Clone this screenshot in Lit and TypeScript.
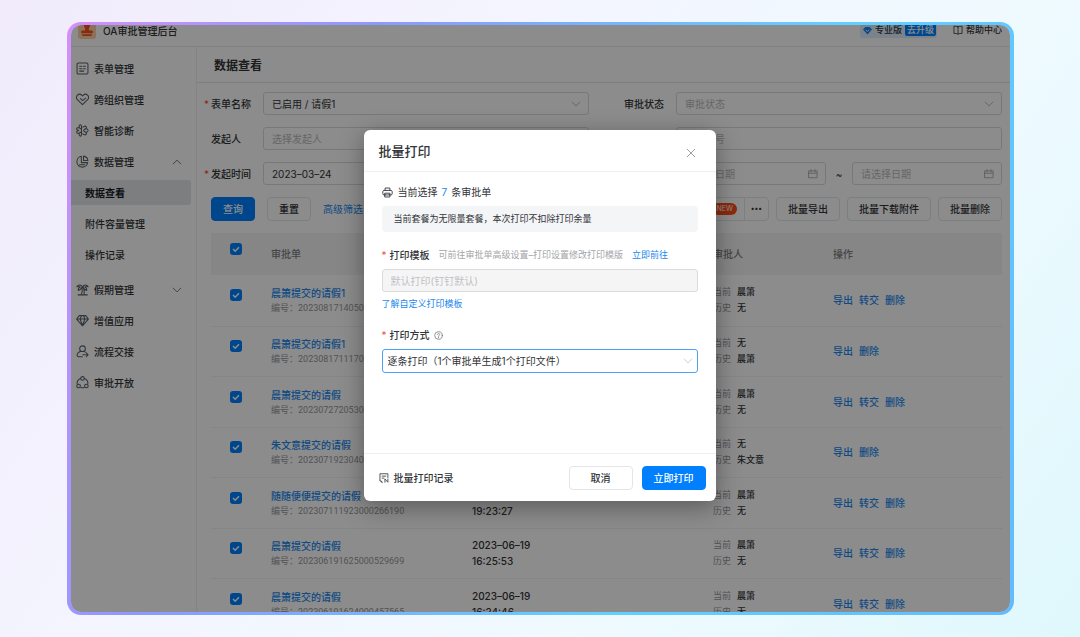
import { LitElement, html, css, svg, nothing } from "lit";
import { customElement, property, state } from "lit/decorators.js";
import { classMap } from "lit/directives/class-map.js";

const glyphs: Record<string, unknown> = {
  form: svg`<rect x="1.300" y="1.300" width="13.400" height="13.400" rx="1.500"/><path d="M4.500 5.200H7M4.500 8.200h3M4.500 11.200h5M9 5.200h2.500M9.500 8.200h2"/>`,
  heart: svg`<path d="M8 14.400 1.700 8.200A4 4 0 0 1 1.800 2.700a3.900 3.900 0 0 1 5.400.1L8 3.600l.8-.8a3.900 3.900 0 0 1 5.400-.1 4 4 0 0 1 .1 5.500L8 14.400Z"/><path d="M11.800 6.200 8.200 9.300 5.500 6.800"/>`,
  smart: svg`<path d="M6.800 4.200C6.900 2.200 6.300.9 5.200 1 3.800 1.200 3.600 3 4.200 4.800 2.500 4.200 1 4.600.8 5.800.6 7 1.800 7.800 3.500 8 1.800 8.300.6 9.200.9 10.400c.4 1.100 1.800 1.300 3.400.7-.7 1.700-.5 3.500.8 3.800 1.200.2 1.800-1.200 1.700-3.200M6.800 4.200v7.500M4.200 4.800l2.600 1.700M4.300 11.100l2.500-1.600"/><path d="M8.500 3.800c1.300-1.300 3.300-1.500 4-.6.700.900.200 2-.7 2.800 1.500-.2 2.700.3 3 1.500M8.500 12.200c1.300 1.300 3.300 1.500 4 .6.700-.9.200-2-.7-2.800 1.500.2 2.700-.3 3-1.500M11.300 5.900 9.200 8l2.100 2.100"/>`,
  pie: svg`<path d="M6.600 1.600a6.700 6.700 0 1 0 7.800 7.800H6.600Z"/><path d="M9.300 1.400v5.300h5.300a6 6 0 0 0-5.300-5.300ZM4.200 12h6.500"/>`,
  palm: svg`<path d="M2.500 14.600h11.500M6.700 14.400c.9-2.900 1.200-6 .8-9.200M10 14.400c.3-3.400 0-6.400-1-9.200M8 4.800C6.300 1.800 3 1.600 1 4.600c1.800-.4 3.200-.2 4.200.4C3.500 5.500 2.600 7 2.800 9.200 4.600 8.600 6.600 7 8 4.800ZM8 4.800c1.700-3 5-3.200 7-.2-1.800-.4-3.200-.2-4.200.4 1.700.5 2.600 2 2.400 4.200C11.400 8.600 9.400 7 8 4.800Z"/>`,
  diamond: svg`<path d="M4 2h8l3.200 4.200L8 14.500.8 6.200ZM.8 6.200h14.400M5 6.200l3 8 3-8M5 6.200 6.800 2M11 6.200 9.200 2"/>`,
  handover: svg`<circle cx="8" cy="4.600" r="3.500"/><path d="M6.200 7.800C3.500 8.700 1.200 11 1.400 13c.1 1 .8 1.400 1.700 1.400h4.700M10 8l1.500.8M8.500 12H15M12.700 9.700 15 12l-2.300 2.300"/>`,
  network: svg`<circle cx="8" cy="3" r="2.200"/><circle cx="3.200" cy="12.300" r="2.200"/><circle cx="12.800" cy="12.300" r="2.200"/><path d="M5.600 3.200C2.800 4.300 1.200 6.800 1.400 9.500M10.400 3.200c2.800 1.100 4.400 3.600 4.200 6.300M6 14.200c1.400.5 2.700.5 4 0"/>`,
  up: svg`<path d="M2 11l6-6 6 6"/>`,
  down: svg`<path d="M2 5l6 6 6-6"/>`,
  calendar: svg`<path d="M1.500 3h13v11h-13ZM1.500 6.800h13M4.800 1v4M11.200 1v4"/>`,
  book: svg`<path d="M8 2.800C6.500 2 4 2 1.500 2v11.500c2.500 0 5 0 6.500 1 1.500-1 4-1 6.500-1V2C12 2 9.500 2 8 2.800ZM8 2.800v11.500"/>`,
  close: svg`<path d="M2 2l12 12M14 2 2 14"/>`,
  printer: svg`<path d="M4.500 5V1.500h7V5M4.500 11.500H3a1.800 1.800 0 0 1-1.800-1.800V6.800A1.800 1.800 0 0 1 3 5h10a1.800 1.800 0 0 1 1.800 1.800v2.900a1.800 1.800 0 0 1-1.800 1.800h-1.500M4.500 9h7v5.500h-7ZM4.500 11.500h7"/>`,
  help: svg`<circle cx="8" cy="8" r="6.800"/><path d="M5.900 6.300c0-2.900 4.200-2.700 4.200-.1 0 1.400-2 1.600-2.100 3.200M8 11v1.200"/>`,
  record: svg`<path d="M5.500 14.800H3.800v-2H1.500V1.200h12.700v6M5 5h6M5 8.200h3M9.500 14.800V9.500l4.700 5.300V9.500"/>`,
};

const icon = (name: string, extra = "") => html`
  <svg class="icon ${extra}" viewBox="0 0 16 16" aria-hidden="true">${glyphs[name]}</svg>
`;

const base = css`
  :host {
    box-sizing: border-box;
    font-family: Inter, "Noto Sans CJK SC", sans-serif;
    font-size: 10px;
    line-height: 16px;
    color: #323437;
  }
  *,
  *::before,
  *::after {
    box-sizing: border-box;
  }
  button,
  input,
  select {
    font: inherit;
    color: inherit;
    margin: 0;
  }
  button {
    cursor: pointer;
  }
  a {
    color: #2088ee;
    text-decoration: none;
  }
  .icon {
    display: block;
    flex: none;
    width: 13px;
    height: 13px;
    fill: none;
    stroke: currentColor;
    stroke-width: 1.3;
    stroke-linecap: round;
    stroke-linejoin: round;
  }
  .icon.small {
    width: 10px;
    height: 10px;
  }
  .btn {
    height: 24px;
    padding: 0 11px;
    border: 1px solid #e4e5e7;
    border-radius: 4px;
    background: #fff;
    font-weight: 500;
    white-space: nowrap;
  }
  .btn.primary {
    border-color: #0080ff;
    background: #0080ff;
    color: #fff;
  }
  .box {
    display: flex;
    align-items: center;
    height: 23px;
    border: 1px solid #dadbdd;
    border-radius: 3px;
    background: #fff;
    min-width: 0;
  }
  .box select,
  .box input {
    flex: 1;
    min-width: 0;
    width: 100%;
    height: 100%;
    padding: 0 8px;
    border: 0;
    outline: 0;
    background: none;
    appearance: none;
  }
  .box .icon {
    color: #a4a6a9;
    margin-right: 7px;
    pointer-events: none;
  }
  .box ::placeholder,
  .box .unset {
    color: #b8babd;
    opacity: 1;
  }
  .star {
    color: #ff5219;
    width: 7px;
    flex: none;
  }
`;

interface NavEntry {
  label: string;
  icon?: string;
  arrow?: "up" | "down";
  active?: boolean;
  last?: boolean;
}

const NAV: NavEntry[] = [
  { label: "表单管理", icon: "form" },
  { label: "跨组织管理", icon: "heart" },
  { label: "智能诊断", icon: "smart" },
  { label: "数据管理", icon: "pie", arrow: "up" },
  { label: "数据查看", active: true },
  { label: "附件容量管理" },
  { label: "操作记录", last: true },
  { label: "假期管理", icon: "palm", arrow: "down" },
  { label: "增值应用", icon: "diamond" },
  { label: "流程交接", icon: "handover" },
  { label: "审批开放", icon: "network" },
];

@customElement("side-nav")
export class SideNav extends LitElement {
  static styles = [
    base,
    css`
      :host {
        display: block;
        padding: 6px 5px 0 0;
        border-right: 1px solid #f0f1f3;
      }
      .item {
        display: flex;
        align-items: center;
        gap: 5px;
        height: 25px;
        margin: 3px 0 6px;
        padding: 0 9px 0 5px;
        color: inherit;
        font-weight: 500;
      }
      .sub {
        padding-left: 14px;
      }
      .last {
        margin-bottom: 10px;
      }
      .active {
        background: #e4e6ea;
        border-radius: 0 3px 3px 0;
        color: #1b1c1e;
        font-weight: 700;
      }
      .icon {
        color: #5c5f63;
      }
      .arrow {
        margin-left: auto;
      }
    `,
  ];

  render() {
    return html`<nav>
      ${NAV.map(
        (n) => html`<a
          href="#"
          class=${classMap({ item: true, sub: !n.icon, active: !!n.active, last: !!n.last })}
          >${n.icon ? icon(n.icon) : nothing}${n.label}${n.arrow
            ? icon(n.arrow, "small arrow")
            : nothing}</a
        >`
      )}
    </nav>`;
  }
}

@customElement("print-dialog")
export class PrintDialog extends LitElement {
  @property({ type: Number }) count = 0;

  static styles = [
    base,
    css`
      :host {
        display: block;
        width: 352px;
        background: #fff;
        border-radius: 6px;
        box-shadow: 0 6px 24px rgba(0, 0, 0, 0.36);
      }
      header {
        display: flex;
        align-items: center;
        justify-content: space-between;
        height: 42px;
        padding: 0 20px 0 15px;
        border-bottom: 1px solid #eeeff0;
      }
      h2 {
        margin: 0;
        font-size: 13px;
        font-weight: 500;
      }
      .close {
        display: block;
        padding: 4px 0 0;
        border: 0;
        background: none;
        color: #85878a;
      }
      .body {
        padding: 12px 18px 80px;
      }
      .line {
        display: flex;
        align-items: center;
        height: 16px;
      }
      .line .icon {
        margin-right: 5px;
        width: 11px;
        height: 11px;
      }
      .num {
        color: #2088ee;
        margin: 0 4px;
      }
      .notice {
        margin: 6px 0 15px;
        padding: 5px 12px;
        border-radius: 4px;
        background: #f4f5f7;
        font-size: 9px;
      }
      .star {
        color: #f0504a;
        width: 8px;
      }
      .hint {
        margin: 0 9px;
        color: #a3a5a8;
      }
      .hint,
      .minor {
        font-size: 9px;
      }
      .line label {
        font-weight: 500;
      }
      .box {
        margin-top: 6px;
      }
      .box.disabled {
        background: #f5f5f6;
      }
      .box.focus {
        height: 24px;
        border-color: #4aa3f3;
      }
      .box.focus select {
        padding: 0 5px;
      }
      .box.focus .icon {
        color: #c3c5c8;
        margin-right: 4px;
      }
      .box input:disabled {
        color: #bfc1c4;
      }
      .more {
        margin: 4px 0 15px;
      }
      .line .help {
        width: 9px;
        height: 9px;
        margin: 0 0 0 4px;
        color: #6d7074;
      }
      footer {
        display: flex;
        align-items: center;
        height: 48px;
        padding: 0 10px 0 15px;
        border-top: 1px solid #eeeff0;
      }
      .records {
        display: flex;
        align-items: center;
        gap: 5px;
        color: inherit;
        font-weight: 500;
        margin-right: auto;
      }
      footer .btn {
        min-width: 64px;
        margin-left: 9px;
      }
    `,
  ];

  render() {
    return html`
      <header>
        <h2 id="title">批量打印</h2>
        <button class="close" aria-label="关闭">${icon("close", "small")}</button>
      </header>
      <div class="body">
        <div class="line">
          ${icon("printer")}当前选择<span class="num">${this.count}</span>条审批单
        </div>
        <div class="notice">当前套餐为无限量套餐，本次打印不扣除打印余量</div>
        <div class="line">
          <span class="star">*</span><label for="tpl">打印模板</label>
          <span class="hint">可前往审批单高级设置–打印设置修改打印模版</span>
          <a class="minor" href="#">立即前往</a>
        </div>
        <div class="box disabled">
          <input id="tpl" disabled .value=${"默认打印(钉钉默认)"} />
        </div>
        <div class="line more"><a class="minor" href="#">了解自定义打印模板</a></div>
        <div class="line">
          <span class="star">*</span><label for="mode">打印方式</label>${icon("help", "help")}
        </div>
        <div class="box focus">
          <select id="mode">
            <option>逐条打印（1个审批单生成1个打印文件）</option>
          </select>
          ${icon("down", "small")}
        </div>
      </div>
      <footer>
        <a class="records" href="#">${icon("record", "small")}批量打印记录</a>
        <button class="btn">取消</button>
        <button class="btn primary">立即打印</button>
      </footer>
    `;
  }
}

interface Row {
  title: string;
  no: string;
  date: string;
  time: string;
  current: string;
  history: string;
}

const ROWS: Row[] = [
  { title: "晨箫提交的请假1", no: "202308171405000512345", date: "2023–08–17", time: "14:05:06", current: "晨箫", history: "无" },
  { title: "晨箫提交的请假1", no: "202308171117000412345", date: "2023–08–17", time: "11:17:06", current: "无", history: "晨箫" },
  { title: "晨箫提交的请假", no: "202307272053000312345", date: "2023–07–27", time: "20:53:06", current: "晨箫", history: "无" },
  { title: "朱文意提交的请假", no: "202307192304000212345", date: "2023–07–19", time: "23:04:06", current: "无", history: "朱文意" },
  { title: "随随便便提交的请假", no: "202307111923000266190", date: "2023–07–11", time: "19:23:27", current: "晨箫", history: "无" },
  { title: "晨箫提交的请假", no: "202306191625000529699", date: "2023–06–19", time: "16:25:53", current: "晨箫", history: "无" },
  { title: "晨箫提交的请假", no: "202306191624000457565", date: "2023–06–19", time: "16:24:46", current: "晨箫", history: "无" },
];

@customElement("app-root")
export class AppRoot extends LitElement {
  @state() private rows = ROWS;

  static styles = [
    base,
    css`
      :host {
        display: block;
        height: 100vh;
        padding: 22px 66px 22px 67px;
        background: linear-gradient(125deg, #f1ebfb 0%, #f4f5ff 35%, #effaff 68%, #dff8fc 100%);
      }
      .frame {
        height: 100%;
        padding: 3px 4px;
        border-radius: 14px;
        background: linear-gradient(112deg, #d48ffb 0%, #8c99ff 26%, #62d0ff 66%, #62bbff 100%);
      }
      .screen {
        position: relative;
        display: flex;
        flex-direction: column;
        height: 100%;
        overflow: hidden;
        border-radius: 10px;
        background: #fff;
      }
      .mask {
        position: absolute;
        inset: 0;
        display: grid;
        place-items: center;
        padding: 0 2px 6px 0;
        background: rgba(0, 0, 0, 0.45);
      }
      .top {
        display: flex;
        flex: none;
        align-items: flex-end;
        height: 22px;
        padding: 0 8px 0 7px;
        border-bottom: 1px solid #ebecee;
      }
      .logo {
        flex: none;
        width: 18px;
        height: 18px;
        margin: 0 7px 7px 0;
      }
      .brand {
        font-weight: 500;
        margin: 0 auto 7px 0;
      }
      .plan,
      .help {
        display: flex;
        align-items: center;
        gap: 3px;
        height: 16px;
        margin-bottom: 8px;
        font-size: 9px;
        font-weight: 500;
        color: inherit;
      }
      .plan {
        padding: 0 1px 0 3px;
        border-radius: 3px;
        background: #dfeeff;
      }
      .plan .gem {
        width: 9px;
        height: 9px;
      }
      .upgrade {
        padding: 0 2px;
        height: 12px;
        line-height: 12px;
        border-radius: 2px;
        background: #0080ff;
        color: #fff;
      }
      .help {
        margin-left: 8px;
        padding-left: 8px;
      }
      .columns {
        display: flex;
        flex: 1;
        min-height: 0;
      }
      side-nav {
        flex: none;
        width: 126px;
      }
      main {
        flex: 1;
        min-width: 0;
      }
      h1 {
        margin: 0;
        padding: 11px 17px 8px;
        border-bottom: 1px solid #e5e6e8;
        font-size: 12px;
        line-height: 16px;
        font-weight: 700;
      }
      .content {
        padding: 9px 8px 0 14px;
      }
      .filters {
        display: grid;
        grid-template-columns: 1fr 1fr;
        gap: 12px 28px;
        margin-left: -7px;
      }
      .field {
        display: flex;
        align-items: center;
      }
      .field label {
        flex: none;
        width: 52px;
        font-weight: 500;
      }
      .field .box {
        flex: 1;
      }
      .tilde {
        width: 26px;
        text-align: center;
      }
      .toolbar {
        display: flex;
        align-items: center;
        gap: 7px;
        margin: 12px 0;
      }
      .toolbar .gap {
        margin-left: 5px;
      }
      .toolbar .advanced {
        margin-right: auto;
      }
      .split {
        display: flex;
      }
      .split .btn:first-child {
        display: flex;
        align-items: center;
        gap: 6px;
        padding: 0 7px 0 11px;
        border-radius: 4px 0 0 4px;
      }
      .split .btn:last-child {
        margin-left: -1px;
        padding: 0 6px;
        border-radius: 0 4px 4px 0;
        font-size: 7px;
      }
      .new {
        height: 12px;
        padding: 0 4px;
        border-radius: 6px;
        background: #ff4d17;
        color: #fff;
        font-size: 7px;
        line-height: 12px;
        font-weight: 400;
      }
      table {
        width: 100%;
        table-layout: fixed;
        border-collapse: collapse;
      }
      th {
        height: 42px;
        padding: 0;
        background: #f5f5f6;
        color: #7c7e82;
        font-weight: 500;
        text-align: left;
      }
      td {
        height: 51px;
        padding: 0;
        border-bottom: 1px solid #f1f2f3;
      }
      tr:nth-child(even) td {
        height: 50px;
      }
      .c-check {
        width: 60px;
      }
      .c-title {
        width: 201px;
      }
      .c-date {
        width: 241px;
      }
      .c-person {
        width: 120px;
      }
      .check {
        padding: 0 0 10px 19px;
      }
      .check input {
        display: block;
        width: 12px;
        height: 12px;
        appearance: none;
        border-radius: 3px;
        background: #0080ff
          url('data:image/svg+xml,<svg xmlns="http://www.w3.org/2000/svg" viewBox="0 0 12 12"><path d="M3 6l2.200 2.200L9 4.200" fill="none" stroke="white" stroke-width="1.500"/></svg>');
      }
      .title {
        display: block;
        font-weight: 500;
      }
      .no {
        display: block;
        color: #96989b;
        font-family: Roboto, "Noto Sans CJK SC", sans-serif;
        font-size: 9px;
        line-height: 14px;
      }
      .person {
        font-size: 9px;
        font-weight: 500;
      }
      .person span {
        display: inline-block;
        width: 24px;
        color: #96989b;
        font-weight: 400;
      }
      .when {
        font-weight: 500;
      }
      .ops {
        display: flex;
        gap: 6px;
        font-weight: 500;
      }
    `,
  ];

  private renderDate(id: string, label: string) {
    return html`<div class="box">
      <input id=${id} aria-label=${label} placeholder="请选择日期" />${icon("calendar", "small")}
    </div>`;
  }

  render() {
    return html`
      <div class="frame">
        <div class="screen">
          <header class="top">
            <svg class="logo" viewBox="0 0 18 18" aria-hidden="true">
              <rect width="18" height="18" rx="3" fill="#ffd0a0" />
              <path
                d="M9 1.500a3 3 0 0 1 2.700 4.300C10.800 7.500 10.600 8.500 11 9.500h2.500c.8 0 1.300.6 1.300 1.300v1.400H3.200v-1.400c0-.7.5-1.300 1.300-1.300H7c.4-1 .2-2-.7-3.700A3 3 0 0 1 9 1.500ZM4.200 13.300h9.600v1.700H4.200Z"
                fill="#f4511e"
              />
            </svg>
            <span class="brand">OA审批管理后台</span>
            <a class="plan" href="#">
              <svg class="gem" viewBox="0 0 10 10" aria-hidden="true">
                <path d="M2.500 1h5L10 4 5 9.500 0 4Z" fill="#1a86f2" />
                <path d="M3 4.200 5 6.200l2-2" fill="none" stroke="#fff" />
              </svg>
              专业版<span class="upgrade">去升级</span>
            </a>
            <a class="help" href="#">${icon("book", "small")}帮助中心</a>
          </header>
          <div class="columns">
            <side-nav></side-nav>
            <main>
              <h1>数据查看</h1>
              <div class="content">
                <div class="filters">
                  <div class="field">
                    <span class="star">*</span><label for="form">表单名称</label>
                    <div class="box">
                      <select id="form">
                        <option>已启用 / 请假1</option></select
                      >${icon("down", "small")}
                    </div>
                  </div>
                  <div class="field">
                    <span class="star"></span><label for="status">审批状态</label>
                    <div class="box">
                      <select id="status" class="unset">
                        <option>审批状态</option></select
                      >${icon("down", "small")}
                    </div>
                  </div>
                  <div class="field">
                    <span class="star"></span><label for="starter">发起人</label>
                    <div class="box"><input id="starter" placeholder="选择发起人" /></div>
                  </div>
                  <div class="field">
                    <span class="star"></span><label for="number">审批单号</label>
                    <div class="box"><input id="number" placeholder="审批单号" /></div>
                  </div>
                  <div class="field">
                    <span class="star">*</span><label for="start">发起时间</label>
                    <div class="box">
                      <input id="start" .value=${"2023–03–24"} />${icon("calendar", "small")}
                    </div>
                    <span class="tilde">~</span>
                    ${this.renderDate("start-end", "发起时间止")}
                  </div>
                  <div class="field">
                    <span class="star"></span><label for="done">完成时间</label>
                    ${this.renderDate("done", "完成时间起")}
                    <span class="tilde">~</span>
                    ${this.renderDate("done-end", "完成时间止")}
                  </div>
                </div>
                <div class="toolbar">
                  <button class="btn primary">查询</button>
                  <button class="btn gap">重置</button>
                  <a class="advanced gap" href="#">高级筛选</a>
                  <div class="split">
                    <button class="btn">批量打印<span class="new">NEW</span></button>
                    <button class="btn" aria-label="更多">•••</button>
                  </div>
                  <button class="btn">批量导出</button>
                  <button class="btn">批量下载附件</button>
                  <button class="btn">批量删除</button>
                </div>
                <table>
                  <thead>
                    <tr>
                      <th class="c-check check">
                        <input type="checkbox" checked aria-label="全选" />
                      </th>
                      <th class="c-title">审批单</th>
                      <th class="c-date">发起时间</th>
                      <th class="c-person">审批人</th>
                      <th>操作</th>
                    </tr>
                  </thead>
                  <tbody>
                    ${this.rows.map(
                      (r) => html`<tr>
                        <td class="check">
                          <input type="checkbox" checked aria-label=${r.title} />
                        </td>
                        <td>
                          <a class="title" href="#">${r.title}</a>
                          <span class="no">编号：${r.no}</span>
                        </td>
                        <td class="when">${r.date}<br />${r.time}</td>
                        <td class="person">
                          <div><span>当前</span>${r.current}</div>
                          <div><span>历史</span>${r.history}</div>
                        </td>
                        <td>
                          <div class="ops">
                            <a href="#">导出</a>
                            ${r.current !== "无" ? html`<a href="#">转交</a>` : nothing}
                            <a href="#">删除</a>
                          </div>
                        </td>
                      </tr>`
                    )}
                  </tbody>
                </table>
              </div>
            </main>
          </div>
          <div class="mask">
            <print-dialog
              role="dialog"
              aria-modal="true"
              aria-label="批量打印"
              .count=${this.rows.length}
            ></print-dialog>
          </div>
        </div>
      </div>
    `;
  }
}
